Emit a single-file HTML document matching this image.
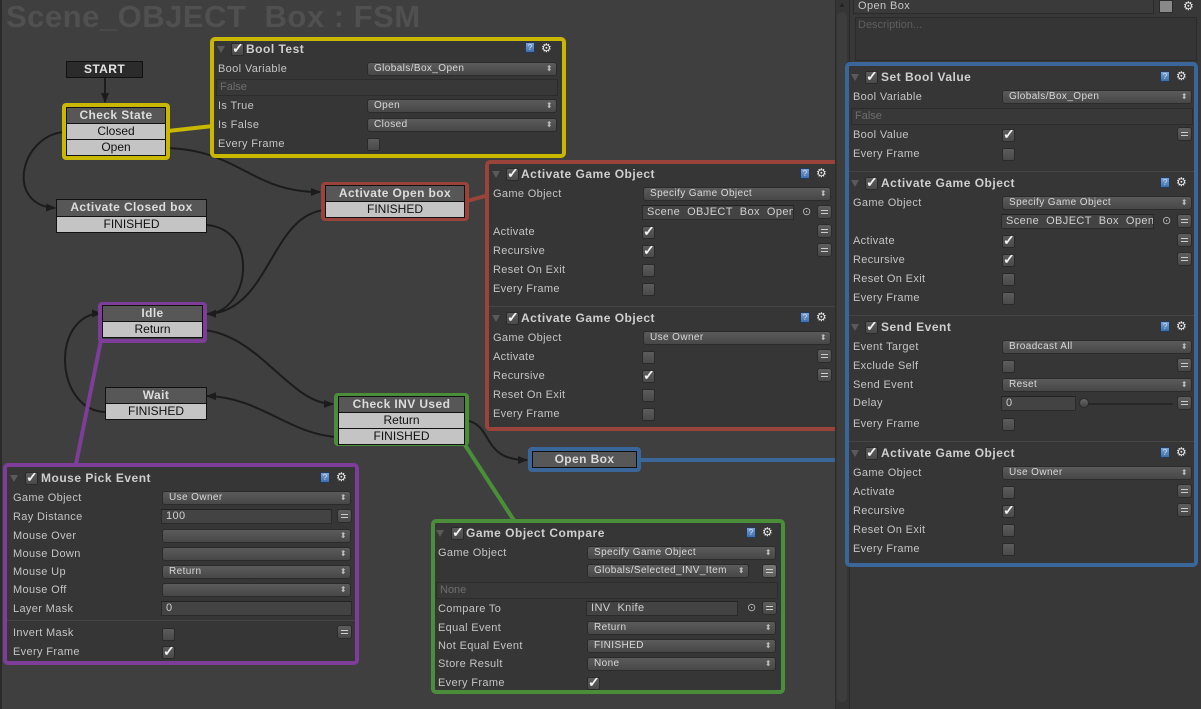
<!DOCTYPE html>
<html><head><meta charset="utf-8"><style>
*{margin:0;padding:0;box-sizing:border-box}
html{width:1201px;height:709px;overflow:hidden}
body{width:1201px;height:709px;overflow:hidden;background:#3f3f3f;position:relative;font-family:"Liberation Sans",sans-serif}
div,span{position:absolute}
.t{left:6px;top:-1px;font:bold 31px "Liberation Sans",sans-serif;color:#505050;white-space:nowrap;letter-spacing:.5px}
.p{background:#363636;border:4px solid;border-radius:5px}
.l{font-size:11px;color:#c4c4c4;letter-spacing:.35px;white-space:nowrap;height:14px;line-height:14px}
.h{font-weight:bold;font-size:12px;color:#cfcfcf;letter-spacing:.5px;white-space:nowrap;line-height:14px}
.tri{width:0;height:0;border-left:4px solid transparent;border-right:4px solid transparent;border-top:7px solid #5a5a5a}
.cb{width:13px;height:13px;border-radius:2px;background:linear-gradient(#5c5c5c,#4a4a4a);border:1px solid #2a2a2a}
.cb.k::after{content:"✓";position:absolute;left:0px;top:-4px;font-size:14px;font-weight:bold;color:#f4f4f4}
.dd{height:14px;border-radius:3px;background:linear-gradient(#5b5b5b,#474747);border:1px solid #2b2b2b;font-size:10px;color:#d8d8d8;padding-left:6px;line-height:12px;letter-spacing:.4px;white-space:nowrap}
.dd::after{content:"⬍";position:absolute;right:3px;top:0;font-size:8px;color:#bbb}
.eq{width:15px;height:14px;border-radius:3px;background:linear-gradient(#5e5e5e,#484848);border:1px solid #2b2b2b}
.eq::after{content:"";position:absolute;left:3px;top:4px;width:7px;height:2px;border-top:1px solid #ccc;border-bottom:1px solid #ccc}
.tf{height:15px;background:#434343;border:1px solid #2a2a2a;border-top-color:#222;font-size:11px;color:#d0d0d0;padding-left:4px;line-height:13px;overflow:hidden;white-space:nowrap;letter-spacing:.4px}
.fr{height:17px;background:#383838;border:1px solid #2c2c2c;font-size:11px;color:#6e6e6e;padding-left:3px;line-height:15px}
.hp{width:10px;height:11px;background:linear-gradient(#7aa3d4,#3e6ea8);border:1px solid #243a5a;border-radius:1px;font-size:8px;color:#dde;text-align:center;line-height:9px}
.gr{font-size:12px;color:#eee;line-height:12px}
.tg{font-size:11px;color:#bbb}
.sp{height:1px;background:#262626;border-bottom:1px solid #454545}
.nh{background:#575757;border:1px solid #111;font-weight:bold;font-size:12px;color:#dcdcdc;text-align:center;line-height:15px;letter-spacing:.4px;white-space:nowrap}
.nr{background:#c4c4c4;border:1px solid #111;border-top:none;font-size:12px;color:#111;text-align:center;line-height:15px;white-space:nowrap}
</style></head><body>
<div style="left:0;top:0;width:2px;height:709px;background:#2a2a2a"></div>
<div class="t">Scene_OBJECT&nbsp; Box : FSM</div>

<svg style="position:absolute;left:0;top:0" width="1201" height="709">
<defs><marker id="a" markerWidth="10" markerHeight="8" refX="9" refY="4" orient="auto" markerUnits="userSpaceOnUse"><path d="M0,0 L10,4 L0,8z" fill="#1c1c1c"/></marker></defs>
<g fill="none" stroke="#1c1c1c" stroke-width="2">
<path d="M105,77 L105,102" marker-end="url(#a)"/>
<path d="M64,132 C20,136 5,205 55,208" marker-end="url(#a)"/>
<path d="M166,148 C240,150 250,192 320,192" marker-end="url(#a)"/>
<path d="M207,225 C260,230 250,312 207,314"/>
<path d="M325,210 C270,215 270,312 207,314" marker-end="url(#a)"/>
<path d="M203,330 C260,335 290,404 333,404" marker-end="url(#a)"/>
<path d="M105,412 C55,410 50,316 101,313" marker-end="url(#a)"/>
<path d="M338,437 C290,435 260,397 207,396" marker-end="url(#a)"/>
<path d="M465,420 C495,425 480,460 527,460" marker-end="url(#a)"/>
</g>
<g stroke-width="4" fill="none">
<path d="M168,131 L213,126" stroke="#c8b800"/>
<path d="M467,201 L489,195" stroke="#9a433a"/>
<path d="M101,340 L76,464" stroke="#7c3e98"/>
<path d="M465,445 L515,522" stroke="#4b8e3a"/>
<path d="M639,460 L848,460" stroke="#3b6699"/>
</g>
</svg>

<div class="nh" style="left:66px;top:61px;width:77px;height:17px;background:#2b2b2b;color:#e6e6e6">START</div>
<div style="left:62px;top:103px;width:108px;height:57px;border:4px solid #c8b800;border-radius:4px"></div>
<div class="nh" style="left:66px;top:107px;width:100px;height:17px">Check State</div>
<div class="nr" style="left:66px;top:124px;width:100px;height:16px">Closed</div>
<div class="nr" style="left:66px;top:140px;width:100px;height:16px">Open</div>
<div class="nh" style="left:56px;top:199px;width:151px;height:18px">Activate Closed box</div>
<div class="nr" style="left:56px;top:217px;width:151px;height:16px">FINISHED</div>
<div style="left:321px;top:182px;width:148px;height:39px;border:4px solid #9a433a;border-radius:4px"></div>
<div class="nh" style="left:325px;top:185px;width:140px;height:17px">Activate Open box</div>
<div class="nr" style="left:325px;top:202px;width:140px;height:16px">FINISHED</div>
<div style="left:98px;top:302px;width:109px;height:41px;border:4px solid #7c3e98;border-radius:4px"></div>
<div class="nh" style="left:102px;top:305px;width:101px;height:17px">Idle</div>
<div class="nr" style="left:102px;top:322px;width:101px;height:16px">Return</div>
<div class="nh" style="left:105px;top:387px;width:102px;height:17px">Wait</div>
<div class="nr" style="left:105px;top:404px;width:102px;height:16px">FINISHED</div>
<div style="left:334px;top:393px;width:135px;height:53px;border:4px solid #4b8e3a;border-radius:4px"></div>
<div class="nh" style="left:338px;top:396px;width:127px;height:17px">Check INV Used</div>
<div class="nr" style="left:338px;top:413px;width:127px;height:16px">Return</div>
<div class="nr" style="left:338px;top:429px;width:127px;height:16px">FINISHED</div>
<div style="left:528px;top:447px;width:113px;height:25px;border:4px solid #3b6699;border-radius:4px"></div>
<div class="nh" style="left:532px;top:451px;width:105px;height:17px">Open Box</div>

<div class="p" style="left:210px;top:37px;width:356px;height:121px;border-color:#c8b800"></div>
<div class="tri" style="left:217px;top:46px"></div><div class="cb k" style="left:231px;top:43px"></div><div class="h" style="left:246px;top:42px">Bool Test</div>
<div class="hp" style="left:525px;top:42px">?</div><div class="gr" style="left:541px;top:42px">⚙</div>
<div class="l" style="left:218px;top:62px">Bool Variable</div><div class="dd" style="left:367px;top:62px;width:190px">Globals/Box_Open</div>
<div class="fr" style="left:216px;top:79px;width:342px">False</div>
<div class="l" style="left:218px;top:99px">Is True</div><div class="dd" style="left:367px;top:99px;width:190px">Open</div>
<div class="l" style="left:218px;top:118px">Is False</div><div class="dd" style="left:367px;top:118px;width:190px">Closed</div>
<div class="l" style="left:218px;top:137px">Every Frame</div><div class="cb" style="left:367px;top:138px"></div>

<div class="p" style="left:485px;top:160px;width:356px;height:271px;border-color:#9a433a"></div>
<div class="tri" style="left:492px;top:171px"></div><div class="cb k" style="left:506px;top:168px"></div><div class="h" style="left:521px;top:167px">Activate Game Object</div>
<div class="hp" style="left:800px;top:168px">?</div><div class="gr" style="left:816px;top:167px">⚙</div>
<div class="l" style="left:493px;top:187px">Game Object</div><div class="dd" style="left:643px;top:187px;width:188px">Specify Game Object</div>
<div class="tf" style="left:642px;top:205px;width:152px">Scene&nbsp; OBJECT&nbsp; Box&nbsp; Open</div><div class="tg" style="left:802px;top:205px">⊙</div><div class="eq" style="left:817px;top:205px"></div>
<div class="l" style="left:493px;top:225px">Activate</div><div class="cb k" style="left:642px;top:226px"></div><div class="eq" style="left:817px;top:224px"></div>
<div class="l" style="left:493px;top:244px">Recursive</div><div class="cb k" style="left:642px;top:245px"></div><div class="eq" style="left:817px;top:243px"></div>
<div class="l" style="left:493px;top:263px">Reset On Exit</div><div class="cb" style="left:642px;top:264px"></div>
<div class="l" style="left:493px;top:282px">Every Frame</div><div class="cb" style="left:642px;top:283px"></div>
<div class="sp" style="left:489px;top:306px;width:348px"></div>
<div class="tri" style="left:492px;top:315px"></div><div class="cb k" style="left:506px;top:312px"></div><div class="h" style="left:521px;top:311px">Activate Game Object</div>
<div class="hp" style="left:800px;top:312px">?</div><div class="gr" style="left:816px;top:311px">⚙</div>
<div class="l" style="left:493px;top:331px">Game Object</div><div class="dd" style="left:643px;top:331px;width:188px">Use Owner</div>
<div class="l" style="left:493px;top:350px">Activate</div><div class="cb" style="left:642px;top:351px"></div><div class="eq" style="left:817px;top:349px"></div>
<div class="l" style="left:493px;top:369px">Recursive</div><div class="cb k" style="left:642px;top:370px"></div><div class="eq" style="left:817px;top:368px"></div>
<div class="l" style="left:493px;top:388px">Reset On Exit</div><div class="cb" style="left:642px;top:389px"></div>
<div class="l" style="left:493px;top:407px">Every Frame</div><div class="cb" style="left:642px;top:408px"></div>

<div class="p" style="left:3px;top:463px;width:356px;height:202px;border-color:#7c3e98"></div>
<div class="tri" style="left:10px;top:475px"></div><div class="cb k" style="left:25px;top:472px"></div><div class="h" style="left:41px;top:471px">Mouse Pick Event</div>
<div class="hp" style="left:320px;top:472px">?</div><div class="gr" style="left:336px;top:471px">⚙</div>
<div class="l" style="left:13px;top:491px">Game Object</div><div class="dd" style="left:162px;top:491px;width:189px">Use Owner</div>
<div class="l" style="left:13px;top:510px">Ray Distance</div><div class="tf" style="left:161px;top:509px;width:171px">100</div><div class="eq" style="left:337px;top:509px"></div>
<div class="l" style="left:13px;top:529px">Mouse Over</div><div class="dd" style="left:162px;top:529px;width:189px"></div>
<div class="l" style="left:13px;top:547px">Mouse Down</div><div class="dd" style="left:162px;top:547px;width:189px"></div>
<div class="l" style="left:13px;top:565px">Mouse Up</div><div class="dd" style="left:162px;top:565px;width:189px">Return</div>
<div class="l" style="left:13px;top:583px">Mouse Off</div><div class="dd" style="left:162px;top:583px;width:189px"></div>
<div class="l" style="left:13px;top:602px">Layer Mask</div><div class="tf" style="left:161px;top:601px;width:191px">0</div>
<div class="sp" style="left:7px;top:620px;width:348px"></div>
<div class="l" style="left:13px;top:626px">Invert Mask</div><div class="cb" style="left:162px;top:628px"></div><div class="eq" style="left:337px;top:625px"></div>
<div class="l" style="left:13px;top:645px">Every Frame</div><div class="cb k" style="left:162px;top:646px"></div>

<div class="p" style="left:431px;top:519px;width:354px;height:175px;border-color:#4b8e3a"></div>
<div class="tri" style="left:436px;top:530px"></div><div class="cb k" style="left:451px;top:527px"></div><div class="h" style="left:466px;top:526px">Game Object Compare</div>
<div class="hp" style="left:746px;top:527px">?</div><div class="gr" style="left:762px;top:526px">⚙</div>
<div class="l" style="left:438px;top:546px">Game Object</div><div class="dd" style="left:587px;top:546px;width:189px">Specify Game Object</div>
<div class="dd" style="left:587px;top:564px;width:162px">Globals/Selected_INV_Item</div><div class="eq" style="left:762px;top:564px;background:linear-gradient(#777,#5e5e5e)"></div>
<div class="fr" style="left:436px;top:582px;width:342px">None</div>
<div class="l" style="left:438px;top:602px">Compare To</div><div class="tf" style="left:586px;top:601px;width:152px">INV&nbsp; Knife</div><div class="tg" style="left:747px;top:601px">⊙</div><div class="eq" style="left:762px;top:601px"></div>
<div class="l" style="left:438px;top:621px">Equal Event</div><div class="dd" style="left:587px;top:621px;width:189px">Return</div>
<div class="l" style="left:438px;top:639px">Not Equal Event</div><div class="dd" style="left:587px;top:639px;width:189px">FINISHED</div>
<div class="l" style="left:438px;top:657px">Store Result</div><div class="dd" style="left:587px;top:657px;width:189px">None</div>
<div class="l" style="left:438px;top:676px">Every Frame</div><div class="cb k" style="left:587px;top:677px"></div>

<div style="left:835px;top:0;width:15px;height:709px;background:#353535;border-left:1px solid #2c2c2c;border-right:1px solid #2a2a2a"></div>
<div style="left:837px;top:12px;width:10px;height:690px;background:#3d3d3d;border-radius:5px"></div>
<div style="left:838px;top:0;font-size:8px;color:#222">▲</div>
<div style="left:850px;top:0;width:351px;height:709px;background:#383838"></div>
<div class="tf" style="left:853px;top:-1px;width:301px;height:15px;background:#3a3a3a;color:#c8c8c8">Open Box</div>
<div style="left:1159px;top:0;width:14px;height:13px;background:#898989;border:1px solid #2a2a2a"></div>
<div class="gr" style="left:1183px;top:0">⚙</div>
<div style="left:855px;top:17px;width:342px;height:44px;background:#353535;border:1px solid #2b2b2b;font-size:11px;color:#5e5e5e;padding:1px 2px">Description...</div>

<div class="p" style="left:845px;top:62px;width:353px;height:505px;border-color:#3b6699"></div>
<div class="tri" style="left:851px;top:74px"></div><div class="cb k" style="left:865px;top:71px"></div><div class="h" style="left:881px;top:70px">Set Bool Value</div>
<div class="hp" style="left:1160px;top:71px">?</div><div class="gr" style="left:1176px;top:70px">⚙</div>
<div class="l" style="left:853px;top:90px">Bool Variable</div><div class="dd" style="left:1002px;top:90px;width:190px">Globals/Box_Open</div>
<div class="fr" style="left:851px;top:108px;width:342px">False</div>
<div class="l" style="left:853px;top:128px">Bool Value</div><div class="cb k" style="left:1002px;top:129px"></div><div class="eq" style="left:1177px;top:127px"></div>
<div class="l" style="left:853px;top:147px">Every Frame</div><div class="cb" style="left:1002px;top:148px"></div>
<div class="sp" style="left:849px;top:171px;width:345px"></div>
<div class="tri" style="left:851px;top:180px"></div><div class="cb k" style="left:865px;top:177px"></div><div class="h" style="left:881px;top:176px">Activate Game Object</div>
<div class="hp" style="left:1160px;top:177px">?</div><div class="gr" style="left:1176px;top:176px">⚙</div>
<div class="l" style="left:853px;top:196px">Game Object</div><div class="dd" style="left:1002px;top:196px;width:190px">Specify Game Object</div>
<div class="tf" style="left:1001px;top:214px;width:153px">Scene&nbsp; OBJECT&nbsp; Box&nbsp; Open</div><div class="tg" style="left:1162px;top:214px">⊙</div><div class="eq" style="left:1177px;top:214px"></div>
<div class="l" style="left:853px;top:234px">Activate</div><div class="cb k" style="left:1002px;top:235px"></div><div class="eq" style="left:1177px;top:233px"></div>
<div class="l" style="left:853px;top:253px">Recursive</div><div class="cb k" style="left:1002px;top:254px"></div><div class="eq" style="left:1177px;top:252px"></div>
<div class="l" style="left:853px;top:272px">Reset On Exit</div><div class="cb" style="left:1002px;top:273px"></div>
<div class="l" style="left:853px;top:291px">Every Frame</div><div class="cb" style="left:1002px;top:292px"></div>
<div class="sp" style="left:849px;top:315px;width:345px"></div>
<div class="tri" style="left:851px;top:324px"></div><div class="cb k" style="left:865px;top:321px"></div><div class="h" style="left:881px;top:320px">Send Event</div>
<div class="hp" style="left:1160px;top:321px">?</div><div class="gr" style="left:1176px;top:320px">⚙</div>
<div class="l" style="left:853px;top:340px">Event Target</div><div class="dd" style="left:1002px;top:340px;width:190px">Broadcast All</div>
<div class="l" style="left:853px;top:359px">Exclude Self</div><div class="cb" style="left:1002px;top:360px"></div><div class="eq" style="left:1177px;top:358px"></div>
<div class="l" style="left:853px;top:378px">Send Event</div><div class="dd" style="left:1002px;top:378px;width:190px">Reset</div>
<div class="l" style="left:853px;top:396px">Delay</div><div class="tf" style="left:1001px;top:396px;width:75px">0</div>
<div style="left:1085px;top:403px;width:88px;height:2px;background:#262626;border-radius:1px"></div>
<div style="left:1079px;top:398px;width:10px;height:10px;border-radius:5px;background:linear-gradient(#666,#444);border:1px solid #2a2a2a"></div>
<div class="eq" style="left:1177px;top:396px"></div>
<div class="l" style="left:853px;top:417px">Every Frame</div><div class="cb" style="left:1002px;top:418px"></div>
<div class="sp" style="left:849px;top:441px;width:345px"></div>
<div class="tri" style="left:851px;top:450px"></div><div class="cb k" style="left:865px;top:447px"></div><div class="h" style="left:881px;top:446px">Activate Game Object</div>
<div class="hp" style="left:1160px;top:447px">?</div><div class="gr" style="left:1176px;top:446px">⚙</div>
<div class="l" style="left:853px;top:466px">Game Object</div><div class="dd" style="left:1002px;top:466px;width:190px">Use Owner</div>
<div class="l" style="left:853px;top:485px">Activate</div><div class="cb" style="left:1002px;top:486px"></div><div class="eq" style="left:1177px;top:484px"></div>
<div class="l" style="left:853px;top:504px">Recursive</div><div class="cb k" style="left:1002px;top:505px"></div><div class="eq" style="left:1177px;top:503px"></div>
<div class="l" style="left:853px;top:523px">Reset On Exit</div><div class="cb" style="left:1002px;top:524px"></div>
<div class="l" style="left:853px;top:542px">Every Frame</div><div class="cb" style="left:1002px;top:543px"></div>
</body></html>
